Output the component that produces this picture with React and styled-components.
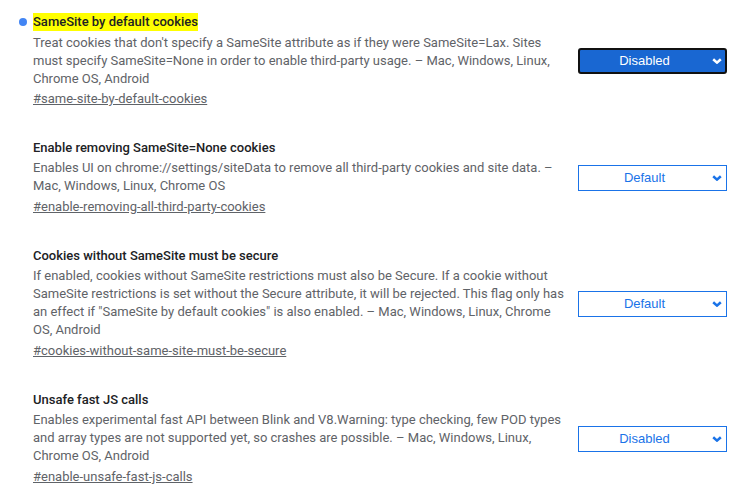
import React from "react";
import styled, { createGlobalStyle } from "styled-components";

const Global = createGlobalStyle`
  html, body { margin: 0; padding: 0; background: #fff; }
  body { font-family: Roboto, "Liberation Sans", Arial, sans-serif; font-size: 13px; color: #202124; }
`;

const Page = styled.div`
  display: flex;
  flex-direction: column;
  gap: 31px;
  padding: 13px 0 0 33px;
  width: 750px;
  box-sizing: border-box;
`;

const Row = styled.div`
  display: flex;
  align-items: center;
  gap: 10px;
`;

const TextCol = styled.div`
  flex: 0 0 535px;
  display: flex;
  flex-direction: column;
`;

const Title = styled.div`
  font-size: 13px;
  font-weight: 500;
  line-height: 18px;
  color: #202124;
  margin-bottom: ${(p) => (p.$highlight ? "3px" : "2px")};
  display: flex;
  align-items: center;
`;

const Dot = styled.span`
  width: 8px;
  height: 8px;
  border-radius: 50%;
  background: #4285f4;
  margin-left: -14px;
  margin-right: 6px;
  flex: none;
`;

const Mark = styled.span`
  background: ${(p) => (p.$on ? "#ffff00" : "transparent")};
  line-height: 18px;
`;

const Desc = styled.p`
  margin: 0;
  font-size: 13px;
  line-height: 18px;
  color: #5f6368;
`;

const Permalink = styled.a`
  margin-top: ${(p) => (p.$highlight ? "2px" : "3px")};
  font-size: 13px;
  line-height: 18px;
  color: #5f6368;
  text-decoration: underline;
  align-self: flex-start;
`;

const SelectWrap = styled.div`
  position: relative;
  flex: 0 0 149px;
  height: 26px;
`;

const Select = styled.select`
  appearance: none;
  -webkit-appearance: none;
  width: 149px;
  height: 26px;
  box-sizing: border-box;
  margin: 0;
  padding: 0 16px 0 0;
  font-family: "Liberation Sans", Arial, sans-serif;
  font-size: 13px;
  text-align: center;
  text-align-last: center;
  border-radius: ${(p) => (p.$active ? "3px" : "0")};
  border: ${(p) => (p.$active ? "2px solid #111" : "1px solid #1a73e8")};
  background: ${(p) => (p.$active ? "#1967d2" : "#fff")};
  color: ${(p) => (p.$active ? "#fff" : "#1a73e8")};
  outline: none;
`;

const Chevron = styled.svg`
  position: absolute;
  right: 5px;
  top: 10px;
  pointer-events: none;
`;

const experiments = [
  {
    name: "SameSite by default cookies",
    desc: "Treat cookies that don't specify a SameSite attribute as if they were SameSite=Lax. Sites must specify SameSite=None in order to enable third-party usage. – Mac, Windows, Linux, Chrome OS, Android",
    link: "#same-site-by-default-cookies",
    value: "Disabled",
    active: true,
  },
  {
    name: "Enable removing SameSite=None cookies",
    desc: "Enables UI on chrome://settings/siteData to remove all third-party cookies and site data. – Mac, Windows, Linux, Chrome OS",
    link: "#enable-removing-all-third-party-cookies",
    value: "Default",
  },
  {
    name: "Cookies without SameSite must be secure",
    desc: 'If enabled, cookies without SameSite restrictions must also be Secure. If a cookie without SameSite restrictions is set without the Secure attribute, it will be rejected. This flag only has an effect if "SameSite by default cookies" is also enabled. – Mac, Windows, Linux, Chrome OS, Android',
    link: "#cookies-without-same-site-must-be-secure",
    value: "Default",
  },
  {
    name: "Unsafe fast JS calls",
    desc: "Enables experimental fast API between Blink and V8.Warning: type checking, few POD types and array types are not supported yet, so crashes are possible. – Mac, Windows, Linux, Chrome OS, Android",
    link: "#enable-unsafe-fast-js-calls",
    value: "Disabled",
  },
];

export default function App() {
  return (
    <>
      <Global />
      <Page>
        {experiments.map((e) => (
          <Row key={e.link}>
            <TextCol>
              <Title $highlight={e.active}>
                {e.active && <Dot />}
                <Mark $on={e.active}>{e.name}</Mark>
              </Title>
              <Desc>{e.desc}</Desc>
              <Permalink href={e.link} $highlight={e.active}>{e.link}</Permalink>
            </TextCol>
            <SelectWrap>
              <Select $active={e.active} defaultValue={e.value}>
                <option>Default</option>
                <option>Enabled</option>
                <option>Disabled</option>
              </Select>
              <Chevron width="10" height="6" viewBox="0 0 10 6">
                <path d="M1.2 1.2L5 4.6l3.8-3.4" fill="none" stroke={e.active ? "#fff" : "#1a73e8"} strokeWidth="2.5" />
              </Chevron>
            </SelectWrap>
          </Row>
        ))}
      </Page>
    </>
  );
}
